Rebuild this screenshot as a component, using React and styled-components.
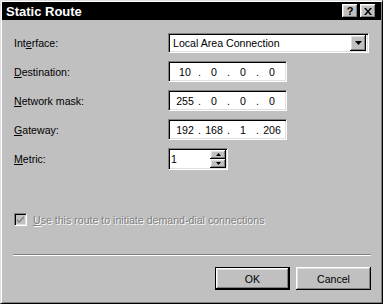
import React from "react";
import styled, { createGlobalStyle } from "styled-components";

const Global = createGlobalStyle`
  html, body {
    margin: 0;
    padding: 0;
    background: #c0c0c0;
  }
  body {
    font-family: "Liberation Sans", Arial, sans-serif;
    font-size: 10.6px;
    color: #000;
  }
`;

const raised = `
  background: #c0c0c0;
  box-shadow: inset -1px -1px #000, inset 1px 1px #fff,
    inset -2px -2px #808080, inset 2px 2px #dfdfdf;
`;

const sunken = `
  box-sizing: border-box;
  border: 1px solid;
  border-color: #808080 #fff #fff #808080;
  box-shadow: inset 1px 1px #000, inset -1px -1px #dfdfdf;
`;

const Window = styled.div`
  width: 383px;
  height: 304px;
  box-sizing: border-box;
  background: #c0c0c0;
  border: 1px solid;
  border-color: #dfdfdf #000 #000 #dfdfdf;
  box-shadow: inset 1px 1px #fff, inset -1px -1px #808080;
  padding: 1px;
  display: flex;
  flex-direction: column;
`;

const TitleBar = styled.div`
  height: 18px;
  background: #000;
  display: flex;
  align-items: center;
  padding: 0 5px 0 4px;
`;

const Title = styled.div`
  color: #fff;
  font-weight: bold;
  font-size: 13px;
  flex: 1;
  margin-top: 1px;
`;

const TitleButton = styled.div`
  ${raised}
  width: 16px;
  height: 14px;
  margin-left: ${(p) => (p.$gap ? "2px" : "0")};
  display: flex;
  align-items: center;
  justify-content: center;
  font-weight: bold;
  font-size: 11px;
  line-height: 1;
`;

const Content = styled.div`
  flex: 1;
  display: flex;
  flex-direction: column;
  padding: 12px 12px 0 12px;
`;

const Form = styled.div`
  display: grid;
  grid-template-columns: 154px auto;
  grid-auto-rows: 21px;
  row-gap: 8px;
  align-items: center;
`;

const Label = styled.div`
  white-space: nowrap;
`;

const Combo = styled.div`
  ${sunken}
  width: 201px;
  height: 20px;
  background: #fff;
  display: flex;
  align-items: center;
  padding: 2px;
`;

const ComboText = styled.div`
  flex: 1;
  padding-left: 2px;
  white-space: nowrap;
`;

const DropButton = styled.div`
  ${raised}
  width: 16px;
  height: 16px;
  display: flex;
  align-items: center;
  justify-content: center;
`;

const IpField = styled.div`
  ${sunken}
  width: 119px;
  height: 21px;
  background: #fff;
  display: flex;
  align-items: center;
  padding-left: 3px;
`;

const Octet = styled.span`
  width: 26px;
  text-align: center;
`;

const Dot = styled.span`
  width: 3px;
`;

const Spin = styled.div`
  ${sunken}
  width: 60px;
  height: 22px;
  background: #fff;
  display: flex;
  padding: 1px;
`;

const SpinText = styled.div`
  flex: 1;
  display: flex;
  align-items: center;
  padding-left: 1px;
`;

const SpinButtons = styled.div`
  width: 16px;
  display: flex;
  flex-direction: column;
`;

const SpinButton = styled.div`
  ${raised}
  flex: 1;
  display: flex;
  align-items: center;
  justify-content: center;
`;

const CheckRow = styled.div`
  margin-top: 44px;
  display: flex;
  align-items: center;
  gap: 6px;
  height: 13px;
`;

const CheckBox = styled.div`
  ${sunken}
  width: 13px;
  height: 13px;
  background: #c0c0c0;
  display: flex;
  align-items: center;
  justify-content: center;
`;

const DisabledText = styled.div`
  color: #808080;
  text-shadow: 1px 1px #fff;
  white-space: nowrap;
`;

const Separator = styled.div`
  margin: 28px -2px 0 -1px;
  border-top: 1px solid #808080;
  border-bottom: 1px solid #fff;
`;

const ButtonRow = styled.div`
  margin-top: 11px;
  display: flex;
  justify-content: flex-end;
  gap: 6px;
  margin-right: -2px;
`;

const Button = styled.div`
  ${raised}
  box-sizing: border-box;
  width: 75px;
  height: 23px;
  display: flex;
  align-items: center;
  justify-content: center;
  ${(p) =>
    p.$default &&
    `
    border: 1px solid #000;
  `}
`;

const Arrow = ({ w, h }) => (
  <svg width={w} height={h} viewBox={`0 0 ${w} ${h}`}>
    <polygon points={`0,0 ${w},0 ${w / 2},${h}`} fill="#000" />
  </svg>
);

const UpArrow = ({ w, h }) => (
  <svg width={w} height={h} viewBox={`0 0 ${w} ${h}`}>
    <polygon points={`0,${h} ${w},${h} ${w / 2},0`} fill="#000" />
  </svg>
);

const Ip = ({ parts }) => (
  <IpField>
    {parts.map((p, i) => (
      <React.Fragment key={i}>
        <Octet>{p}</Octet>
        {i < 3 && <Dot>.</Dot>}
      </React.Fragment>
    ))}
  </IpField>
);

export default function App() {
  return (
    <>
      <Global />
      <Window>
        <TitleBar>
          <Title>Static Route</Title>
          <TitleButton>?</TitleButton>
          <TitleButton $gap>
            <svg width="8" height="7" viewBox="0 0 8 7">
              <path d="M0 0h2l2 2.5L6 0h2L5 3.5 8 7H6L4 4.5 2 7H0l3-3.5z" fill="#000" />
            </svg>
          </TitleButton>
        </TitleBar>
        <Content>
          <Form>
            <Label>
              Int<u>e</u>rface:
            </Label>
            <Combo>
              <ComboText>Local Area Connection</ComboText>
              <DropButton>
                <Arrow w={7} h={4} />
              </DropButton>
            </Combo>

            <Label>
              <u>D</u>estination:
            </Label>
            <Ip parts={["10", "0", "0", "0"]} />

            <Label>
              <u>N</u>etwork mask:
            </Label>
            <Ip parts={["255", "0", "0", "0"]} />

            <Label>
              <u>G</u>ateway:
            </Label>
            <Ip parts={["192", "168", "1", "206"]} />

            <Label>
              <u>M</u>etric:
            </Label>
            <Spin>
              <SpinText>1</SpinText>
              <SpinButtons>
                <SpinButton>
                  <UpArrow w={5} h={3} />
                </SpinButton>
                <SpinButton>
                  <Arrow w={5} h={3} />
                </SpinButton>
              </SpinButtons>
            </Spin>
          </Form>

          <CheckRow>
            <CheckBox>
              <svg width="9" height="9" viewBox="0 0 9 9">
                <path d="M1 4l2 2 5-5v2L3 8 1 6z" fill="#808080" />
              </svg>
            </CheckBox>
            <DisabledText>
              <u>U</u>se this route to initiate demand-dial connections
            </DisabledText>
          </CheckRow>

          <Separator />

          <ButtonRow>
            <Button $default>OK</Button>
            <Button>Cancel</Button>
          </ButtonRow>
        </Content>
      </Window>
    </>
  );
}
